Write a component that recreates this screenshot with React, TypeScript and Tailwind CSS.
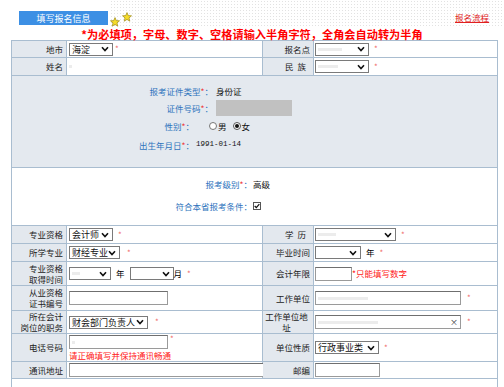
import React from "react";

const LINE = "border-[#a9bdd0]";

function Chevron() {
  return (
    <svg width="8" height="6" viewBox="0 0 8 6" className="shrink-0">
      <path d="M1 1.2 L4 4.6 L7 1.2" fill="none" stroke="#111" strokeWidth="1.6" />
    </svg>
  );
}

function Star({ className }: { className: string }) {
  return (
    <svg width="10" height="10" viewBox="0 0 10 10" className={className}>
      <polygon
        points="5,0.6 6.3,3.6 9.5,3.8 7,5.9 7.8,9.2 5,7.4 2.2,9.2 3,5.9 0.5,3.8 3.7,3.6"
        fill="#f6dc2a"
        stroke="#9c8a1c"
        strokeWidth="0.7"
      />
    </svg>
  );
}

function Select({ className, children }: { className: string; children?: React.ReactNode }) {
  return (
    <div
      className={`flex h-[13px] items-center justify-between border border-[#7a7a7a] bg-white pl-[2px] pr-[3px] text-[9px] leading-none text-[#111] ${className}`}
    >
      <span className="flex items-center">{children}</span>
      <Chevron />
    </div>
  );
}

function Input({ className, children }: { className: string; children?: React.ReactNode }) {
  return (
    <div
      className={`flex h-[14px] items-center justify-between border border-[#9a9a9a] border-t-[#6f6f6f] bg-white px-[2px] text-[9px] ${className}`}
    >
      {children}
    </div>
  );
}

// 打码后的模糊内容
function Smudge({ className }: { className: string }) {
  return <span className={`inline-block h-[3px] bg-[#ececec] ${className}`} />;
}

function Req({ className = "ml-[5px]" }: { className?: string }) {
  return <span className={`text-[8px] leading-none text-[#f06a6a] ${className}`}>*</span>;
}

function Label({ children, center }: { children: React.ReactNode; center?: boolean }) {
  return (
    <div
      className={`flex items-center border-r ${LINE} bg-[#e3e8ee] pr-[3px] text-[8.5px] leading-[11px] text-[#222] ${
        center ? "justify-center text-center" : "justify-end text-right"
      }`}
    >
      <div>{children}</div>
    </div>
  );
}

function Row({
  h,
  l1,
  v1,
  l2,
  v2,
  c2,
}: {
  h: string;
  l1: React.ReactNode;
  v1: React.ReactNode;
  l2: React.ReactNode;
  v2: React.ReactNode;
  c2?: boolean;
}) {
  return (
    <div className={`grid grid-cols-[55px_196px_51px_184px] border-b ${LINE} ${h}`}>
      <Label>{l1}</Label>
      <div className={`flex items-center border-r ${LINE} bg-white pl-[2px]`}>{v1}</div>
      <Label center={c2}>{l2}</Label>
      <div className={`flex items-center border-r ${LINE} bg-white pl-[1px]`}>{v2}</div>
    </div>
  );
}

function Blue({ children }: { children: React.ReactNode }) {
  return (
    <span className="text-[#2e74bd]">
      {children}
      <span className="text-[#ee3a3a]">*</span>：
    </span>
  );
}

export default function App() {
  return (
    <div className="h-[387px] w-[504px] overflow-hidden bg-white font-['Noto_Sans_CJK_SC','Noto_Sans',sans-serif]">
      <div className="relative h-[40px]">
        <div className="absolute left-[110px] right-0 top-0 h-[26px] bg-[radial-gradient(#e2e2e2_0.7px,transparent_0.8px)] bg-[length:3px_3px]" />
        <div className="relative flex items-start pl-[19px] pt-[11px]">
          <div className="flex h-[14px] w-[89px] items-center justify-center bg-[#3c8fe4] text-[9px] leading-none text-white">
            填写报名信息
          </div>
          <Star className="ml-[2px] mt-[6px]" />
          <Star className="ml-[2px] mt-[1px]" />
          <a className="ml-auto mr-[15px] text-[8.5px] leading-[12px] text-[#e02020] underline">报名流程</a>
        </div>
        <div className="relative mt-[1px] text-center text-[11.2px] font-bold leading-[13px] text-[#ff0000]">
          *为必填项，字母、数字、空格请输入半角字符，全角会自动转为半角
        </div>
      </div>

      <div className={`ml-[11px] w-[487px] border-l border-t ${LINE}`}>
        <Row
          h="h-[17px]"
          l1="地市"
          v1={
            <>
              <Select className="w-[44px]">海淀</Select>
              <Req className="ml-[2px]" />
            </>
          }
          l2="报名点"
          v2={
            <>
              <Select className="w-[54px]">
                <Smudge className="w-[24px]" />
              </Select>
              <Req />
            </>
          }
        />
        <Row
          h="h-[18px]"
          l1="姓名"
          v1={<Smudge className="w-[3px]" />}
          l2={<span className="tracking-[4px]">民族</span>}
          v2={
            <>
              <Select className="w-[54px]">
                <Smudge className="w-[20px]" />
              </Select>
              <Req />
            </>
          }
        />

        <div className={`h-[92px] border-b border-r ${LINE} bg-[#e4e9ef] pt-[9px] text-[8.5px] leading-none text-[#111]`}>
          <div className="flex h-[12px] items-center">
            <div className="w-[201px] text-right">
              <Blue>报考证件类型</Blue>
            </div>
            <div className="pl-[3px]">身份证</div>
          </div>
          <div className="mt-[3px] flex h-[16px] items-center">
            <div className="w-[201px] text-right">
              <Blue>证件号码</Blue>
            </div>
            <div className="ml-[3px] h-[16px] w-[76px] bg-[#c1c1c1]" />
          </div>
          <div className="mt-[3px] flex h-[14px] items-center">
            <div className="w-[182px] text-right">
              <Blue>性别</Blue>
            </div>
            <div className="ml-[15px] flex items-center">
              <span className="h-[8px] w-[8px] rounded-full border border-[#777] bg-white" />
              <span className="ml-[1px]">男</span>
              <span className="ml-[6px] flex h-[8px] w-[8px] items-center justify-center rounded-full border border-[#555] bg-white">
                <span className="h-[4px] w-[4px] rounded-full bg-[#111]" />
              </span>
              <span className="ml-[1px]">女</span>
            </div>
          </div>
          <div className="mt-[6px] flex h-[12px] items-center">
            <div className="w-[182px] text-right">
              <Blue>出生年月日</Blue>
            </div>
            <div className="pl-[2px] font-['Liberation_Mono',monospace] text-[7.5px]">1991-01-14</div>
          </div>
        </div>

        <div className={`h-[58px] border-b border-r ${LINE} bg-white pt-[10px] text-[8.5px] leading-none text-[#111]`}>
          <div className="flex h-[12px] items-center">
            <div className="w-[240px] text-right">
              <Blue>报考级别</Blue>
            </div>
            <div className="pl-[1px]">高级</div>
          </div>
          <div className="mt-[10px] flex h-[12px] items-center">
            <div className="w-[240px] text-right text-[#2e74bd]">符合本省报考条件：</div>
            <span className="ml-[1px] flex h-[8px] w-[8px] items-center justify-center border border-[#555] bg-white">
              <svg width="7" height="6" viewBox="0 0 7 6">
                <path d="M0.8 3 L2.7 5 L6.2 0.8" fill="none" stroke="#111" strokeWidth="1.4" />
              </svg>
            </span>
          </div>
        </div>

        <Row
          h="h-[18px]"
          l1="专业资格"
          v1={
            <>
              <Select className="w-[44px]">会计师</Select>
              <Req />
            </>
          }
          l2={<span className="tracking-[4px]">学历</span>}
          v2={
            <>
              <Select className="w-[81px]">
                <Smudge className="w-[18px]" />
              </Select>
              <Req />
            </>
          }
        />
        <Row
          h="h-[18px]"
          l1="所学专业"
          v1={
            <>
              <Select className="w-[51px]">财经专业</Select>
              <Req className="ml-[7px]" />
            </>
          }
          l2="毕业时间"
          v2={
            <>
              <Select className="w-[46px]" />
              <span className="ml-[5px] text-[8.5px]">年</span>
              <Req />
            </>
          }
        />
        <Row
          h="h-[24px]"
          l1={
            <>
              专业资格
              <br />
              取得时间
            </>
          }
          v1={
            <>
              <Select className="w-[42px]">
                <Smudge className="w-[8px]" />
              </Select>
              <span className="ml-[5px] text-[8.5px]">年</span>
              <Select className="ml-[5px] w-[44px]" />
              <span className="text-[8.5px]">月</span>
              <Req />
            </>
          }
          l2="会计年限"
          v2={
            <>
              <Input className="w-[37px]" />
              <span className="text-[8.5px] text-[#ff2020]">*只能填写数字</span>
            </>
          }
        />
        <Row
          h="h-[25px]"
          l1={
            <>
              从业资格
              <br />
              证书编号
            </>
          }
          v1={<Input className="w-[99px]" />}
          l2="工作单位"
          v2={
            <>
              <Input className="w-[146px]">
                <Smudge className="w-[50px]" />
              </Input>
              <Req className="ml-[6px]" />
            </>
          }
        />
        <Row
          h="h-[23px]"
          l1={
            <>
              所在会计
              <br />
              岗位的职务
            </>
          }
          v1={
            <>
              <Select className="w-[79px]">财会部门负责人</Select>
              <Req className="ml-[7px]" />
            </>
          }
          c2
          l2={
            <>
              工作单位地
              <br />址
            </>
          }
          v2={
            <>
              <Input className="w-[146px]">
                <Smudge className="w-[60px]" />
                <span className="text-[8px] leading-none text-[#333]">×</span>
              </Input>
              <Req className="ml-[6px]" />
            </>
          }
        />
        <Row
          h="h-[28px]"
          l1="电话号码"
          v1={
            <div className="flex flex-col">
              <div className="flex items-start">
                <Input className="w-[99px]">
                  <Smudge className="w-[3px]" />
                </Input>
                <Req className="ml-[2px]" />
              </div>
              <span className="mt-[1px] text-[8.5px] leading-[10px] text-[#ff2020]">请正确填写并保持通讯畅通</span>
            </div>
          }
          l2="单位性质"
          v2={
            <>
              <Select className="w-[64px]">行政事业类</Select>
              <Req />
            </>
          }
        />
        <Row
          h="h-[17px]"
          l1="通讯地址"
          v1={<Input className="-mr-[4px] w-[196px]" />}
          l2="邮编"
          v2={<Input className="w-[65px]" />}
        />
        <div className={`h-[12px] border-r ${LINE} bg-white`} />
      </div>
    </div>
  );
}
